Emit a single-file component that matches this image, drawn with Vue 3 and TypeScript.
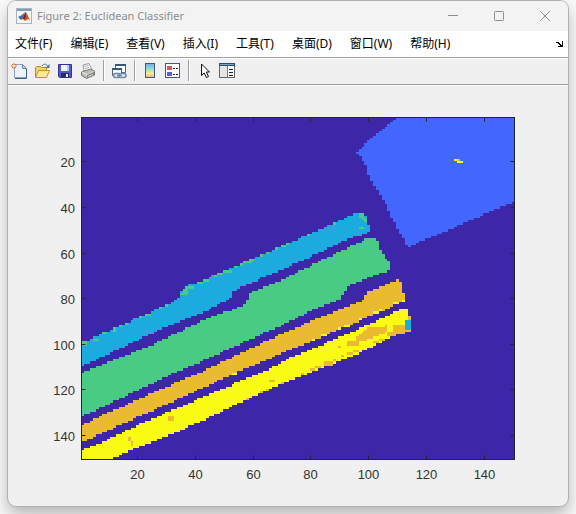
<script setup lang="ts">
type Point = [number, number]
interface Region {
  name: string
  color: string
  points: Point[]
}

const menus = ['文件(F)', '编辑(E)', '查看(V)', '插入(I)', '工具(T)', '桌面(D)', '窗口(W)', '帮助(H)']

// Axes box in canvas units, and the size of the classified raster.
const axes = { x: 81.5, y: 117.5, w: 433, h: 342 }
const cells = 150
const cellW = axes.w / cells
const cellH = axes.h / cells

const palette = {
  indigo: '#3e26a8',
  blue: '#4367fe',
  cyan: '#1caadf',
  green: '#4acb84',
  orange: '#eaba30',
  yellow: '#f9fb15',
}

// Corners of an axis-aligned block.
function block(x: number, y: number, w: number, h: number): Point[] {
  return [[x, y], [x + w, y], [x + w, y + h], [x, y + h]]
}
function speck(name: string, color: string, x: number, y: number, w: number, h: number): Region {
  return { name, color, points: block(x, y, w, h) }
}

const regions: Region[] = [
  {
    name: 'plate', color: palette.blue,
    points: [[398, 116], [356, 152], [365, 163], [370, 178], [385, 203], [391, 216], [408, 248], [420, 242], [460, 225], [496, 209], [516, 201], [516, 116]],
  },
  {
    name: 'cyan band', color: palette.cyan,
    points: [
      [81, 344], [98, 335], [120, 327], [137, 318], [173, 302], [178, 297], [182, 290], [187, 286], [203, 280], [227, 270], [255, 258],
      [293, 241], [310, 234], [356, 213], [365, 213], [368, 224], [370, 225], [370, 232], [350, 238], [310, 257], [290, 266], [260, 279],
      [233, 291], [230, 299], [208, 310], [185, 319], [157, 331], [117, 350], [81, 367],
    ],
  },
  {
    name: 'green band', color: palette.green,
    points: [
      [81, 374], [100, 365], [147, 347], [208, 318], [246, 305], [249, 293], [280, 281], [310, 266], [368, 238], [376, 238], [382, 253],
      [391, 264], [391, 270], [367, 278], [347, 287], [341, 299], [315, 309], [280, 326], [200, 362], [185, 368], [81, 417],
    ],
  },
  {
    name: 'orange band', color: palette.orange,
    points: [
      [81, 426], [103, 415], [157, 391], [210, 368], [283, 333], [343, 308], [364, 300], [367, 292], [396, 280], [400, 279], [402, 292],
      [405, 293], [405, 301], [380, 312], [340, 329], [290, 350], [233, 374], [200, 389], [140, 416], [81, 443],
    ],
  },
  {
    name: 'yellow band', color: palette.yellow,
    points: [
      [81, 450], [107, 440], [140, 424], [210, 394], [267, 370], [290, 358], [350, 333], [400, 310], [408, 308], [408, 316], [411, 316],
      [411, 330], [385, 340], [357, 354], [290, 380], [247, 399], [210, 417], [173, 434], [128, 451], [110, 460], [81, 460],
    ],
  },
  {
    name: 'orange patch', color: palette.orange,
    points: [[347, 342], [357, 339], [357, 336], [368, 328], [394, 325], [405, 324], [411, 326], [411, 330], [393, 337], [387, 337], [387, 332], [376, 337], [358, 342], [358, 346], [347, 346]],
  },
  speck('yellow streak', palette.yellow, 387, 326, 6, 5),
  speck('band tip', palette.cyan, 405, 321, 6, 9),
  speck('tip edge', palette.orange, 408, 316, 3, 5),
  speck('plate mark', palette.yellow, 454, 158, 3, 2),
  speck('plate mark', palette.orange, 457, 158, 3, 2),
  speck('plate mark', palette.yellow, 457, 160, 6, 3),
  // Stray green cells along the upper cyan edge.
  speck('fringe', palette.green, 82, 342, 5, 4),
  speck('fringe', palette.green, 87, 340, 5, 2),
  speck('fringe', palette.green, 92, 338, 6, 2),
  speck('fringe', palette.green, 103, 332, 4, 2),
  speck('fringe', palette.green, 112, 328, 4, 4),
  speck('fringe', palette.green, 119, 325, 4, 2),
  speck('fringe', palette.green, 124, 323, 3, 2),
  speck('fringe', palette.green, 139, 316, 4, 2),
  speck('fringe', palette.green, 145, 314, 5, 2),
  speck('fringe', palette.green, 159, 307, 4, 2),
  speck('fringe', palette.green, 165, 305, 3, 2),
  speck('fringe', palette.green, 179, 293, 9, 2),
  speck('fringe', palette.green, 182, 289, 6, 5),
  speck('fringe', palette.green, 185, 286, 9, 3),
  speck('fringe', palette.green, 197, 282, 6, 2),
  speck('fringe', palette.green, 203, 279, 5, 3),
  speck('fringe', palette.green, 214, 275, 3, 2),
  speck('fringe', palette.green, 217, 272, 6, 3),
  speck('fringe', palette.green, 223, 270, 8, 2),
  speck('fringe', palette.green, 234, 266, 4, 2),
  speck('fringe', palette.green, 240, 263, 3, 3),
  speck('fringe', palette.green, 243, 261, 8, 2),
  speck('fringe', palette.green, 249, 259, 6, 2),
  speck('fringe', palette.green, 260, 254, 3, 2),
  speck('fringe', palette.green, 266, 252, 3, 2),
  speck('fringe', palette.green, 275, 247, 3, 3),
  speck('fringe', palette.green, 281, 245, 5, 2),
  speck('fringe', palette.green, 286, 243, 3, 2),
  speck('fringe', palette.green, 307, 234, 3, 2),
  speck('fringe', palette.green, 333, 222, 3, 2),
  speck('fringe', palette.green, 359, 213, 6, 5),
  speck('fringe', palette.green, 362, 217, 5, 3),
  speck('fringe', palette.green, 364, 219, 3, 3),
  speck('fringe', palette.green, 359, 227, 6, 2),
  // Mixed cells in and around the two lower bands.
  speck('mix', palette.yellow, 233, 373, 4, 2),
  speck('mix', palette.yellow, 312, 339, 3, 2),
  speck('mix', palette.yellow, 321, 334, 6, 3),
  speck('mix', palette.yellow, 339, 327, 3, 3),
  speck('mix', palette.yellow, 345, 325, 4, 2),
  speck('mix', palette.yellow, 359, 318, 3, 3),
  speck('mix', palette.yellow, 373, 311, 6, 3),
  speck('mix', palette.yellow, 379, 309, 3, 2),
  speck('mix', palette.yellow, 393, 302, 6, 3),
  speck('mix', palette.yellow, 402, 300, 3, 2),
  speck('mix', palette.orange, 168, 417, 6, 4),
  speck('mix', palette.orange, 127, 437, 3, 5),
  speck('mix', palette.orange, 130, 442, 3, 4),
  speck('mix', palette.orange, 269, 380, 6, 2),
  speck('mix', palette.orange, 339, 346, 2, 2),
  speck('mix', palette.orange, 373, 341, 6, 2),
  speck('mix', palette.orange, 379, 339, 5, 2),
  speck('mix', palette.orange, 353, 349, 6, 4),
  speck('mix', palette.orange, 347, 353, 6, 2),
  speck('mix', palette.orange, 341, 355, 3, 2),
  speck('mix', palette.orange, 333, 359, 3, 3),
  speck('mix', palette.orange, 324, 362, 9, 3),
  speck('mix', palette.orange, 315, 366, 6, 3),
  speck('mix', palette.orange, 310, 369, 5, 2),
  speck('mix', palette.orange, 301, 373, 3, 2),
  speck('mix', palette.orange, 281, 382, 3, 2),
  speck('mix', palette.orange, 266, 389, 3, 3),
  speck('mix', palette.orange, 260, 391, 3, 2),
  speck('mix', palette.orange, 246, 398, 3, 2),
]

// Rasterise a region: one rectangle per run of cells whose centres lie inside it.
function rasterise(points: Point[]): string {
  let d = ''
  for (let row = 0; row < cells; row++) {
    const cy = axes.y + (row + 0.5) * cellH
    const hits: number[] = []
    points.forEach(([x1, y1], i) => {
      const [x2, y2] = points[(i + 1) % points.length]
      if (y1 <= cy !== y2 <= cy) hits.push(x1 + ((cy - y1) * (x2 - x1)) / (y2 - y1))
    })
    hits.sort((a, b) => a - b)
    for (let i = 0; i + 1 < hits.length; i += 2) {
      const from = Math.max(0, Math.round((hits[i] - axes.x) / cellW))
      const to = Math.min(cells, Math.round((hits[i + 1] - axes.x) / cellW))
      if (to <= from) continue
      const left = Math.round(axes.x + from * cellW)
      const right = Math.round(axes.x + to * cellW)
      const top = Math.round(axes.y + row * cellH)
      const bottom = Math.round(axes.y + (row + 1) * cellH)
      d += `M${left} ${top}H${right}V${bottom}H${left}Z`
    }
  }
  return d
}

const shapes = regions.map((r) => ({ color: r.color, d: rasterise(r.points) }))
const ticks = [20, 40, 60, 80, 100, 120, 140].map((value) => ({
  value,
  x: Math.floor(axes.x + (value - 0.5) * cellW) + 0.5,
  y: Math.floor(axes.y + (value - 0.5) * cellH) + 0.5,
}))
const right = axes.x + axes.w
const bottom = axes.y + axes.h
</script>

<template>
  <main class="window">
    <header class="titlebar">
      <svg class="logo" viewBox="0 0 16 16" aria-hidden="true">
        <rect x=".5" y=".5" width="15" height="15" fill="#f4f6f8" stroke="#a9b4bf" />
        <path d="M1 1h14v2H1z" fill="#7d9db8" />
        <path d="M2 9l4-2 3-3-2 7-2 1z" fill="#3a73a8" />
        <path d="M5 11l2-1 2.500-6 1 1 3.500 7-2-1-3 2-1.500-2z" fill="#d9531e" />
        <path d="M7 10l2.500-6 .5 5-2 3z" fill="#8b2318" />
      </svg>
      <h1>Figure 2: Euclidean Classifier</h1>
      <div class="controls">
        <button type="button" aria-label="Minimize"><svg viewBox="0 0 12 12"><path d="M1 5.500h10" /></svg></button>
        <button type="button" aria-label="Maximize"><svg viewBox="0 0 12 12"><rect x="1.500" y="1.500" width="9" height="9" rx="1" /></svg></button>
        <button type="button" aria-label="Close"><svg viewBox="0 0 12 12"><path d="M1 1l10 10M11 1L1 11" /></svg></button>
      </div>
    </header>

    <nav class="menubar">
      <button v-for="menu in menus" :key="menu" type="button">{{ menu }}</button>
      <button class="dock" type="button" aria-label="Dock">
        <svg viewBox="0 0 8 6" shape-rendering="crispEdges"><path d="M0 1h3v1h1v1h1v1h1V0h1v6H2V5h2V4H3V3H2V2H0z" /></svg>
      </button>
    </nav>

    <div class="toolbar" role="toolbar">
      <button type="button" aria-label="New">
        <svg viewBox="0 0 16 16">
          <path d="M3.500 1.500h8l4 4v9h-12z" fill="#eaf3fd" stroke="#8ba2c8" />
          <path d="M11.500 1.500v4h4z" fill="#b9d0ec" stroke="#7088ae" />
          <path d="M15.500 6v9.500H4" fill="none" stroke="#3f5c91" />
          <path d="M3 0v6M0 3h6M1 1l4 4M5 1L1 5" stroke="#df6b3a" />
          <circle cx="3" cy="3" r="1.200" fill="#ffe6b8" />
        </svg>
      </button>
      <button type="button" aria-label="Open">
        <svg viewBox="0 0 16 16">
          <path d="M1.500 14V4.500l1-1h4l1 1h5V7" fill="#f5d36c" stroke="#bd8d1d" />
          <path d="M1.500 14.500l3-7h11l-3 7z" fill="#fbe996" stroke="#c4941f" />
          <path d="M8 3c2-3 5-2 6 1" fill="none" stroke="#51759c" />
          <path d="M15.500 1v4h-4z" fill="#51759c" />
        </svg>
      </button>
      <button type="button" aria-label="Save">
        <svg viewBox="0 0 16 16">
          <path d="M1.500 1.500h13v13h-12l-1-1z" fill="#5559cc" stroke="#30348e" />
          <path d="M4 2h8v6H4z" fill="#edf2fc" />
          <path d="M10 2h2v6h-2z" fill="#b9c6e5" />
          <path d="M4 10h8v4H4z" fill="#252a66" />
          <path d="M9 11h2v3H9z" fill="#f4f4f4" />
        </svg>
      </button>
      <button type="button" aria-label="Print">
        <svg viewBox="0 0 16 16">
          <path d="M4 8l-1-6 6-1.500L12 7z" fill="#fff" stroke="#999" />
          <path d="M4.500 3.500l4-1M5 5.500l4-1" stroke="#aaa" />
          <path d="M1.500 9l9-3 4 2v4l-8 3.500-5-3z" fill="#bdbdb7" stroke="#777" />
          <path d="M2 9l5 3 7-3.500" fill="none" stroke="#ececec" />
          <path d="M7 12v3l7-3V9z" fill="#85857f" />
          <path d="M8 13.500l5-2" stroke="#e8e6d0" />
        </svg>
      </button>
      <span class="separator"></span>
      <button type="button" aria-label="Link Plot">
        <svg viewBox="0 0 16 16">
          <path d="M4.500 1.500h10v8h-10z" fill="#fff" stroke="#456584" />
          <path d="M4 1h11v2H4z" fill="#345978" />
          <path d="M1.500 5.500h9v7h-9z" fill="#f5f8fb" stroke="#456584" />
          <path d="M1 5h10v2H1z" fill="#345978" />
          <g fill="none" stroke="#6f8aa6" stroke-width="1.500">
            <rect x="2.500" y="10.500" width="7" height="4" rx="2" fill="#dfe9f2" />
            <rect x="8" y="10.500" width="7" height="4" rx="2" fill="#dfe9f2" />
            <path d="M6 12.500h5" />
          </g>
        </svg>
      </button>
      <span class="separator"></span>
      <button type="button" aria-label="Insert Colorbar">
        <svg viewBox="0 0 16 16">
          <defs>
            <linearGradient id="bar" x2="0" y2="1">
              <stop offset="0" stop-color="#78a7e8" />
              <stop offset=".4" stop-color="#90e0d2" />
              <stop offset=".7" stop-color="#f2ed95" />
              <stop offset="1" stop-color="#efb083" />
            </linearGradient>
          </defs>
          <rect x="3.500" y=".5" width="9" height="14" fill="url(#bar)" stroke="#46577f" />
        </svg>
      </button>
      <button type="button" aria-label="Insert Legend">
        <svg viewBox="0 0 16 16">
          <rect x=".5" y=".5" width="14" height="14" fill="#fff" stroke="#46577f" />
          <path d="M2 3h5v4H2z" fill="#e15656" />
          <path d="M2 9h5v4H2z" fill="#5961d5" />
          <path d="M8 5.500h2M11 5.500h2M8 11.500h2M11 11.500h2" stroke="#222" />
        </svg>
      </button>
      <span class="separator"></span>
      <button type="button" aria-label="Edit Plot">
        <svg viewBox="0 0 16 16">
          <path d="M5.500 1v11.500l2.700-2.500 2.300 4.500 2-1L10.300 9h3.200z" fill="#fff" stroke="#111" />
        </svg>
      </button>
      <button type="button" aria-label="Property Inspector">
        <svg viewBox="0 0 16 16">
          <rect x=".5" y=".5" width="15" height="14" fill="#e5e5e5" stroke="#666" />
          <path d="M0 0h16v3H0z" fill="#294e72" />
          <path d="M1 1h14v1H1z" fill="#75a3c8" />
          <path d="M9 3h6v11H9z" fill="#fff" />
          <path d="M8.500 3v11" stroke="#777" />
          <path d="M10 6.500h4M10 9.500h4M10 12.500h4" stroke="#222" />
        </svg>
      </button>
    </div>

    <svg class="figure" viewBox="8 86 560 420" role="img" aria-label="Euclidean Classifier">
      <rect :x="axes.x" :y="axes.y" :width="axes.w" :height="axes.h" :fill="palette.indigo" />
      <g shape-rendering="crispEdges">
        <path v-for="(shape, i) in shapes" :key="i" :d="shape.d" :fill="shape.color" />
      </g>
      <g class="rules">
        <rect :x="axes.x" :y="axes.y" :width="axes.w" :height="axes.h" />
        <template v-for="tick in ticks" :key="tick.value">
          <path :d="`M${tick.x} ${axes.y}v4M${tick.x} ${bottom}v-4M${axes.x} ${tick.y}h4M${right} ${tick.y}h-4`" />
        </template>
      </g>
      <g class="labels">
        <template v-for="tick in ticks" :key="tick.value">
          <text :x="tick.x" y="479" text-anchor="middle">{{ tick.value }}</text>
          <text x="75" :y="tick.y + 5" text-anchor="end">{{ tick.value }}</text>
        </template>
      </g>
    </svg>
  </main>
</template>

<style>
body {
  background: #f8f8f8;
}
</style>

<style scoped>
.window {
  margin: 1px 8px 8px;
  overflow: hidden;
  border-radius: 8px;
  background: #f0f0f0;
  box-shadow: 0 0 0 1px #b0b0b0, 0 8px 16px rgba(0, 0, 0, 0.28);
  font-family: "Noto Sans", "Noto Sans CJK SC", sans-serif;
}
button {
  display: flex;
  align-items: center;
  justify-content: center;
  padding: 0;
  border: 0;
  background: none;
  color: inherit;
  font: inherit;
}
.titlebar {
  display: flex;
  align-items: center;
  height: 30px;
  padding-left: 8px;
  background: #f3f3f3;
  color: #8c8c8c;
}
.logo {
  width: 16px;
  height: 16px;
}
h1 {
  flex: 1;
  margin: 0 0 0 5px;
  font: 400 11px/16px "Noto Sans", sans-serif;
}
.controls {
  display: flex;
}
.controls button {
  width: 46px;
  height: 30px;
}
.controls svg {
  width: 12px;
  height: 12px;
  fill: none;
  stroke: #8c8c8c;
}
.menubar {
  display: flex;
  align-items: center;
  gap: 18px;
  height: 26px;
  padding: 0 4px 0 7px;
  background: #fff;
  border-bottom: 1px solid #a0a0a0;
  color: #000;
  font-size: 12px;
  line-height: 18px;
  white-space: nowrap;
}
.dock {
  margin-left: auto;
}
.dock svg {
  width: 8px;
  height: 6px;
}
.toolbar {
  display: flex;
  align-items: center;
  height: 23px;
  padding-bottom: 2px;
  border-top: 1px solid #fff;
  border-bottom: 1px solid #a0a0a0;
}
.toolbar button {
  justify-content: flex-start;
  width: 23px;
  height: 22px;
  padding-left: 3px;
}
.toolbar button svg {
  width: 16px;
  height: 16px;
}
.separator {
  width: 1px;
  height: 21px;
  margin: 0 3px;
  background: #a0a0a0;
  border-right: 1px solid #fff;
}
.figure {
  display: block;
  width: 100%;
  height: auto;
  border-top: 1px solid #fff;
}
.rules {
  fill: none;
  stroke: #262626;
}
.labels {
  fill: #333;
  font: 13px "Liberation Sans", sans-serif;
}
</style>
